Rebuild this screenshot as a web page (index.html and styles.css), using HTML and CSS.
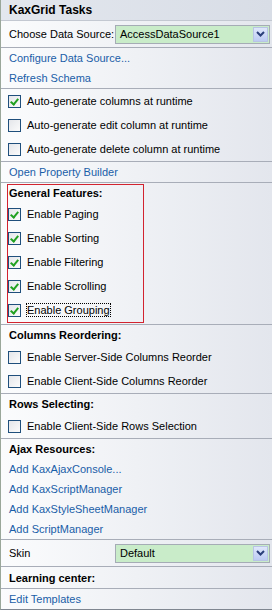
FILE: index.html
```html
<!DOCTYPE html>
<html lang="en">
<head>
    <meta charset="UTF-8" />
    <title>KaxGrid Tasks</title>
    <link rel="stylesheet" href="styles.css">
</head>
<body>
    <div class="panel">
        <div class="titulo">KaxGrid Tasks</div>

        <div class="seccion">
            <div class="fila combo-fila">
                <span class="etiqueta">Choose Data Source:</span>
                <div class="combo">
                    <span>AccessDataSource1</span>
                    <span class="flecha"><svg width="9" height="6" viewBox="0 0 9 6"><path d="M1 1 L4.5 4.5 L8 1" fill="none" stroke="#2a3f7a" stroke-width="2"/></svg></span>
                </div>
            </div>
        </div>

        <div class="seccion">
            <a class="fila enlace" href="#">Configure Data Source...</a>
            <a class="fila enlace" href="#">Refresh Schema</a>
        </div>

        <div class="seccion">
            <label class="fila check"><span class="caja marcada"></span>Auto-generate columns at runtime</label>
            <label class="fila check"><span class="caja"></span>Auto-generate edit column at runtime</label>
            <label class="fila check"><span class="caja"></span>Auto-generate delete column at runtime</label>
        </div>

        <div class="seccion">
            <a class="fila enlace" href="#">Open Property Builder</a>
        </div>

        <div class="seccion">
            <div class="resaltado">
                <div class="encabezado">General Features:</div>
                <label class="fila check"><span class="caja marcada"></span>Enable Paging</label>
                <label class="fila check"><span class="caja marcada"></span>Enable Sorting</label>
                <label class="fila check"><span class="caja marcada"></span>Enable Filtering</label>
                <label class="fila check"><span class="caja marcada"></span>Enable Scrolling</label>
                <label class="fila check"><span class="caja marcada"></span><span class="foco">Enable Grouping</span></label>
            </div>
        </div>

        <div class="seccion">
            <div class="encabezado">Columns Reordering:</div>
            <label class="fila check"><span class="caja"></span>Enable Server-Side Columns Reorder</label>
            <label class="fila check"><span class="caja"></span>Enable Client-Side Columns Reorder</label>
        </div>

        <div class="seccion">
            <div class="encabezado">Rows Selecting:</div>
            <label class="fila check"><span class="caja"></span>Enable Client-Side Rows Selection</label>
        </div>

        <div class="seccion">
            <div class="encabezado">Ajax Resources:</div>
            <a class="fila enlace" href="#">Add KaxAjaxConsole...</a>
            <a class="fila enlace" href="#">Add KaxScriptManager</a>
            <a class="fila enlace" href="#">Add KaxStyleSheetManager</a>
            <a class="fila enlace" href="#">Add ScriptManager</a>
        </div>

        <div class="seccion">
            <div class="fila combo-fila">
                <span class="etiqueta">Skin</span>
                <div class="combo">
                    <span>Default</span>
                    <span class="flecha"><svg width="9" height="6" viewBox="0 0 9 6"><path d="M1 1 L4.5 4.5 L8 1" fill="none" stroke="#2a3f7a" stroke-width="2"/></svg></span>
                </div>
            </div>
        </div>

        <div class="seccion">
            <div class="encabezado alto">Learning center:</div>
        </div>

        <div class="seccion ultima">
            <a class="fila enlace" href="#">Edit Templates</a>
        </div>
    </div>
</body>
</html>
```

FILE: styles.css
```css
:root {
    --enlace: #1a5ea8;
    --linea: #a8adb8;
    --rojo: #d2232f;
    --verde-combo: #c9ecc9;
}

body {
    margin: 0;
    font-family: 'Liberation Sans', Arial, sans-serif;
    font-size: 11px;
    color: #000;
}

.panel {
    width: 271px;
    height: 609px;
    border-left: 1px solid #9aa79a;
    border-bottom: 1px solid #7f8690;
    background: linear-gradient(to right, #fbfcfd, #e3e6ed);
}

.titulo {
    height: 20px;
    line-height: 20px;
    padding-left: 8px;
    font-weight: bold;
    font-size: 12px;
    background: linear-gradient(to right, #e3e7ee, #d8dde6);
    border-bottom: 1px solid #c3c8d1;
}

.seccion {
    border-bottom: 1px solid var(--linea);
}

.ultima {
    border-bottom: none;
}

.fila {
    display: flex;
    align-items: center;
    padding-left: 7px;
}

.combo-fila {
    height: 26px;
    justify-content: space-between;
    padding-right: 2px;
}

.etiqueta {
    padding-left: 1px;
}

.combo {
    width: 149px;
    height: 17px;
    border: 1px solid #a5acb5;
    background: var(--verde-combo);
    display: flex;
    align-items: center;
    justify-content: space-between;
    padding-left: 4px;
}

.flecha {
    width: 15px;
    height: 15px;
    margin-right: 1px;
    background: linear-gradient(#dfe7fb, #bccbf3);
    border: 1px solid #b8c4e4;
    box-sizing: border-box;
    display: flex;
    align-items: center;
    justify-content: center;
}

.enlace {
    height: 20px;
    color: var(--enlace);
    text-decoration: none;
    padding-left: 8px;
}

.check {
    height: 24px;
}

.caja {
    width: 11px;
    height: 11px;
    border: 1px solid #1f4f7c;
    background: linear-gradient(135deg, #e4e6ea, #fbfbfb);
    margin-right: 6px;
    position: relative;
}

.marcada::after {
    content: "";
    position: absolute;
    left: 3px;
    top: 1px;
    width: 3px;
    height: 6px;
    border: solid #21a121;
    border-width: 0 2px 2px 0;
    transform: rotate(40deg);
}

.encabezado {
    height: 20px;
    line-height: 21px;
    padding-left: 8px;
    font-weight: bold;
}

.encabezado.alto {
    height: 21px;
    line-height: 22px;
}

.resaltado {
    width: 135px;
    margin-left: 6px;
    margin-top: 1px;
    margin-bottom: 1px;
    border: 1px solid var(--rojo);
}

.resaltado .fila {
    padding-left: 0;
}

.resaltado .encabezado {
    padding-left: 1px;
    height: 17px;
    line-height: 17px;
}

.foco {
    outline: 1px dotted #000;
    outline-offset: 0;
}
```
